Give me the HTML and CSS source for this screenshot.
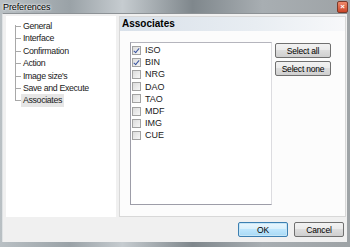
FILE: index.html
```html
<!DOCTYPE html>
<html lang="en">
<head>
  <meta charset="UTF-8">
  <title>Preferences</title>
  <link rel="stylesheet" href="styles.css">
</head>
<body>
  <div class="window">
    <div class="titlebar">
      <span class="title">Preferences</span>
      <span class="close">&#215;</span>
    </div>
    <div class="client">
      <div class="main">
        <ul class="tree">
          <li>General</li>
          <li>Interface</li>
          <li>Confirmation</li>
          <li>Action</li>
          <li>Image size's</li>
          <li>Save and Execute</li>
          <li class="selected">Associates</li>
        </ul>
        <div class="page">
          <div class="page-header">Associates</div>
          <div class="page-body">
            <div class="checklist">
              <label class="check"><span class="box checked"></span>ISO</label>
              <label class="check"><span class="box checked"></span>BIN</label>
              <label class="check"><span class="box"></span>NRG</label>
              <label class="check"><span class="box"></span>DAO</label>
              <label class="check"><span class="box"></span>TAO</label>
              <label class="check"><span class="box"></span>MDF</label>
              <label class="check"><span class="box"></span>IMG</label>
              <label class="check"><span class="box"></span>CUE</label>
            </div>
            <div class="side-buttons">
              <button class="btn">Select all</button>
              <button class="btn">Select none</button>
            </div>
          </div>
        </div>
      </div>
      <div class="footer">
        <button class="btn default">OK</button>
        <button class="btn">Cancel</button>
      </div>
    </div>
  </div>
</body>
</html>
```

FILE: styles.css
```css
body {
  margin: 0;
  font-family: 'Liberation Sans', Arial, sans-serif;
  font-size: 9px;
  color: #000;
  background: #6f7275;
}

.window {
  width: 350px;
  height: 247px;
  background: linear-gradient(90deg, #b9c0c4 0%, #9aa2a7 20%, #c6ccd0 35%, #7f878c 55%, #a8aeb2 75%, #9ea3a6 100%);
  overflow: hidden;
}

.titlebar {
  height: 13px;
  display: flex;
  align-items: center;
  justify-content: space-between;
  padding: 0 2px 0 3px;
}

.title {
  font-size: 9px;
  letter-spacing: -0.1px;
  text-shadow: 0 0 3px #fff, 0 0 2px #fff;
}

.close {
  width: 9px;
  height: 10px;
  margin-top: 1px;
  border: 1px solid #7a3a2a;
  border-radius: 2px;
  background: linear-gradient(#ee8a6c, #cc4527);
  color: #fff;
  font-size: 8px;
  line-height: 9px;
  text-align: center;
  font-weight: bold;
}

.client {
  margin-left: 2px;
  width: 345px;
  height: 229px;
  border-top: 1px solid #8d9296;
  border-left: 1px solid #dfe2e4;
  background: #f0f0f0;
  display: flex;
  flex-direction: column;
  box-sizing: border-box;
}

.main {
  display: flex;
  gap: 3px;
  padding: 2px 0 0 3px;
  height: 201px;
}

.tree {
  list-style: none;
  margin: 0;
  padding: 4px 0 0 15px;
  width: 110px;
  height: 201px;
  box-sizing: border-box;
  background: #fff;
  position: relative;
  font-size: 8.8px;
  letter-spacing: -0.35px;
  color: #1a1a1a;
}

.tree::before {
  content: "";
  position: absolute;
  left: 9px;
  top: 9px;
  height: 75px;
  border-left: 1px solid #a8a8a8;
}

.tree li {
  height: 12.4px;
  line-height: 12px;
  position: relative;
  padding-left: 2px;
}

.tree li::before {
  content: "";
  position: absolute;
  left: -6px;
  top: 6px;
  width: 6px;
  border-top: 1px solid #a8a8a8;
}

.tree li.selected {
  display: inline-block;
  background: #e6e6e6;
  padding: 0 2px;
}

.page {
  width: 227px;
  height: 201px;
  box-sizing: border-box;
  border: 1px solid #d8d8d8;
  background: #fcfcfc;
}

.page-header {
  height: 14px;
  line-height: 14px;
  padding-left: 2px;
  font-weight: bold;
  font-size: 10px;
  background: linear-gradient(90deg, #d9e1ea 0%, #e8edf2 60%, #f7f8fa 100%);
}

.page-body {
  display: flex;
  gap: 3px;
  padding: 11px 0 0 10px;
}

.checklist {
  width: 142px;
  height: 163px;
  box-sizing: border-box;
  border: 1px solid #9d9da8;
  border-right-color: #dcdce0;
  border-top-color: #b5b5bd;
  background: #fff;
  padding: 1px 0 0 1px;
  display: flex;
  flex-direction: column;
}

.check {
  height: 12.2px;
  display: flex;
  align-items: center;
  gap: 4px;
  font-size: 9px;
  color: #222;
}

.box {
  width: 7px;
  height: 7px;
  border: 1px solid #a2a2a2;
  background: linear-gradient(135deg, #dcdcdc, #f6f6f6);
  position: relative;
}

.box.checked::after {
  content: "";
  position: absolute;
  left: 2px;
  top: 0;
  width: 2px;
  height: 5px;
  border: solid #3a55a0;
  border-width: 0 1.5px 1.5px 0;
  transform: rotate(40deg);
}

.side-buttons {
  display: flex;
  flex-direction: column;
  gap: 3px;
  padding-top: 1px;
}

.btn {
  height: 15px;
  padding: 0;
  border: 1px solid #707070;
  border-radius: 2px;
  background: linear-gradient(#f2f2f2 0%, #ebebeb 45%, #dddddd 50%, #cfcfcf 100%);
  font-family: 'Liberation Sans', Arial, sans-serif;
  font-size: 8.5px;
  letter-spacing: -0.2px;
  color: #000;
}

.side-buttons .btn {
  width: 56px;
}

.footer {
  display: flex;
  justify-content: flex-end;
  gap: 6px;
  padding: 5px 3px 0 0;
}

.footer .btn {
  width: 50px;
}

.btn.default {
  border-color: #3c7fb1;
  background: linear-gradient(#eaf6fd 0%, #d9f0fc 45%, #bee6fd 50%, #a7d9f5 100%);
  box-shadow: inset 0 0 0 1px #c6e6f7;
}
```
